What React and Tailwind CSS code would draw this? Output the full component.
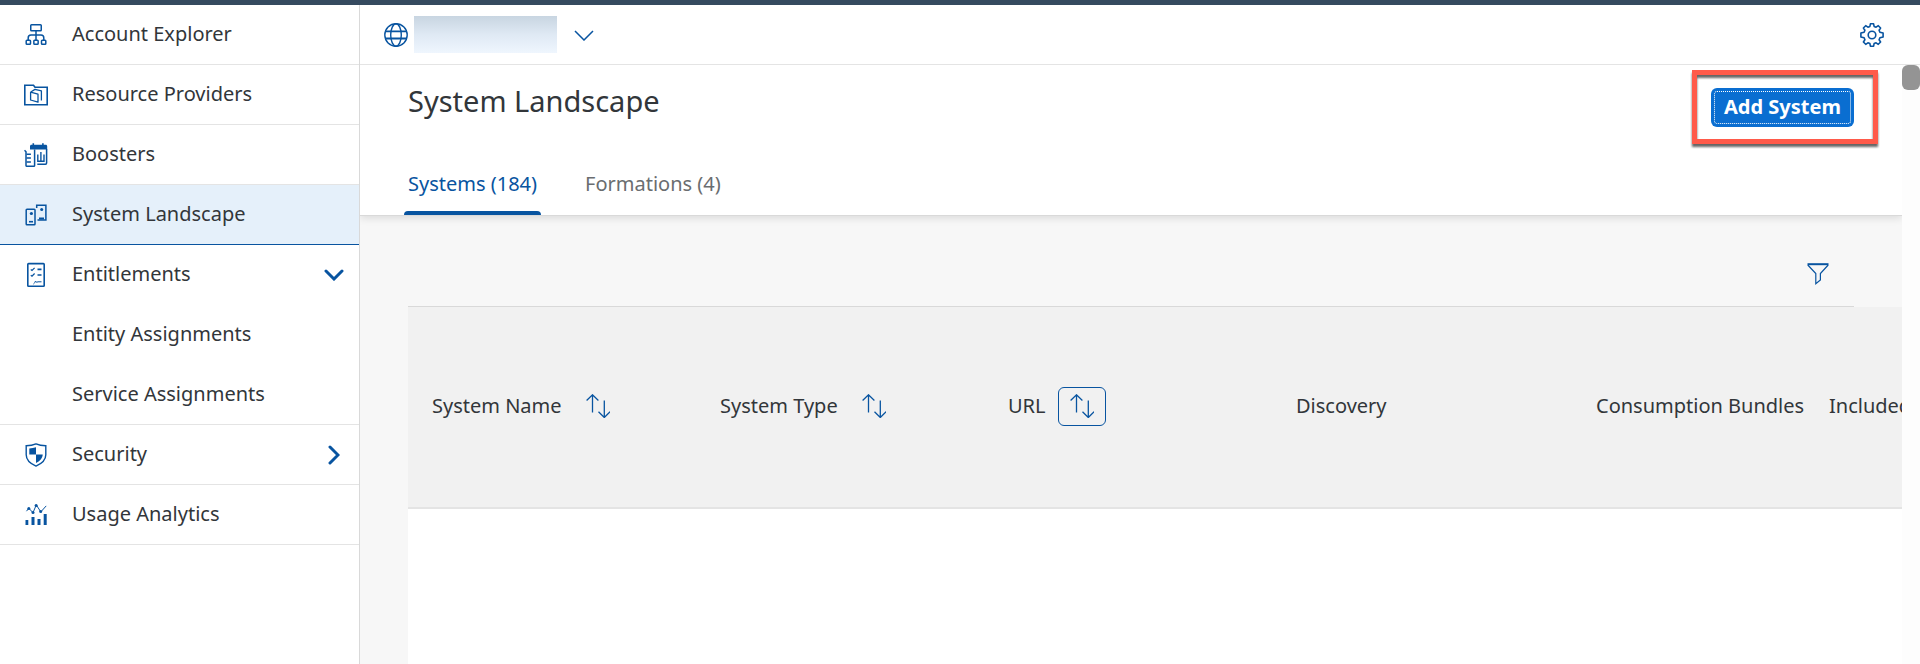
import React from "react";

function Icon({ children, className = "size-6" }) {
  return (
    <svg
      viewBox="0 0 24 24"
      className={`${className} shrink-0`}
      fill="none"
      stroke="currentColor"
      strokeWidth="1.5"
      aria-hidden="true"
    >
      {children}
    </svg>
  );
}

const OrgIcon = () => (
  <Icon>
    <rect x="6.75" y="1.75" width="10.5" height="6" rx="0.8" />
    <path d="M12 8v9M4.2 17v-2c0-1.8 1-3 2.8-3h10c1.8 0 2.8 1.200 2.800 3v2" />
    <rect x="2.200" y="17.250" width="4.300" height="4" rx="0.800" />
    <rect x="9.850" y="17.250" width="4.300" height="4" rx="0.800" />
    <rect x="17.500" y="17.250" width="4.300" height="4" rx="0.800" />
  </Icon>
);

const FolderIcon = () => (
  <Icon>
    <path d="M.8 21.700V2.300h8.700l1.500 2h12.200v17.400z" strokeWidth="1.600" />
    <path d="M6.600 9.200l7.400 2v8l-7.400-2.200zM6.800 9l4.200-2.600 6.400 1.400v9.700" strokeWidth="1.300" strokeLinejoin="round" />
  </Icon>
);

const BoostersIcon = () => (
  <Icon>
    <path d="M6 6.500V3.200c0-.9.600-1.500 1.500-1.500h1V.3h1.600v1.400h8V.3h1.600v1.400h2c.9 0 1.500.6 1.500 1.500v3.300z" fill="currentColor" stroke="none" />
    <path d="M22.600 6v14c0 .8-.4 1.200-1.200 1.200H13.300" strokeWidth="1.500" />
    <path d="M.5 7.300l1.500 1.500v13.600c0 .6.300.9.900.9h6.800c.6 0 .9-.3.900-.9V6.500" strokeWidth="1.500" />
    <path d="M2.500 11.300h4.400M2.500 15.100h4.400M2.500 18.900h4.400" />
    <path d="M13.800 11.500v6.800h6.200v-6.800M16.900 9v9" strokeWidth="1.400" />
  </Icon>
);

const LandscapeIcon = () => (
  <Icon>
    <rect x="2.200" y="6.200" width="8.800" height="15.500" rx="0.800" />
    <path d="M5 18.700h4" strokeWidth="1.600" />
    <circle cx="7.400" cy="10.500" r="1.600" fill="currentColor" stroke="none" />
    <path d="M12.700 5V2.300h9.200v14.600h-8.400" />
    <path d="M15 14.500h5v2h-5z" fill="currentColor" stroke="none" />
    <circle cx="17.700" cy="6.400" r="1.500" fill="currentColor" stroke="none" />
  </Icon>
);

const ChecklistIcon = () => (
  <Icon className="h-[26px] w-6">
    <rect x="3.800" y="0.600" width="16.400" height="22.600" rx="0.800" strokeWidth="1.600" />
    <path d="M6.800 6.500l1.200 1 2.600-2.700M6.800 12.200l1.200 1 2.600-2.700" strokeWidth="1.200" />
    <path d="M13.500 6.300h4M13.500 12h4" strokeWidth="1.700" />
    <path d="M9.500 21c1.200-.8 1.600-2.200 2-3l1 1.300 1.500-.5h3.500" strokeWidth="1" />
  </Icon>
);

const ShieldIcon = () => (
  <Icon>
    <path d="M12 .9c3 1.400 6.500 1.900 9.800 1.900v9c0 5-4.200 8.900-9.800 11.300-5.600-2.400-9.800-6.300-9.800-11.300v-9c3.300 0 6.800-.5 9.800-1.900z" strokeWidth="1.400" />
    <path d="M12 4.300v7.200H5.300V5.400c2.400 0 4.700-.4 6.700-1.100zM12 11.500h6.700c0 3.700-3 6.600-6.700 8.500z" fill="currentColor" stroke="none" />
  </Icon>
);

const AnalyticsIcon = () => (
  <Icon>
    <path d="M2.500 8.200L4.800 5.200 9 9.700l3.300-7.800 4.500 7 5.400-6" strokeWidth="1" />
    <g fill="currentColor" stroke="none">
      <circle cx="4.800" cy="5.600" r="1.500" />
      <circle cx="9" cy="9.500" r="1.500" />
      <circle cx="12.100" cy="2.600" r="1.500" />
      <circle cx="16.700" cy="8.600" r="1.500" />
      <path d="M1.500 17h2.800v5H1.500zM7.500 14h3v8h-3zM13.500 16h3v6h-3zM19.700 11h3v11h-3z" />
    </g>
  </Icon>
);

const GlobeIcon = () => (
  <Icon>
    <circle cx="12" cy="12" r="11.200" strokeWidth="1.400" />
    <ellipse cx="12" cy="12" rx="5.300" ry="11.200" strokeWidth="1.400" />
    <path d="M1.500 8.300h21M1.500 15.500h21" strokeWidth="1.800" />
  </Icon>
);

const GearIcon = () => (
  <Icon>
    <path
      d="M9.900 3.400L10.400.8h3.200l.5 2.600 2 .8 2.200-1.500 2.300 2.300-1.500 2.200.8 2 3.200.9v3.800l-3.200.9-.8 2 1.500 2.200-2.300 2.300-2.200-1.500-2 .8-.5 2.600h-3.200l-.5-2.600-2-.8-2.200 1.500L3.400 19l1.500-2.200-.8-2-3.200-.9v-3.800l3.200-.9.800-2L3.400 5l2.300-2.300 2.200 1.500z"
      strokeWidth="1.600"
      strokeLinejoin="round"
    />
    <circle cx="12" cy="12" r="3.800" strokeWidth="1.600" />
  </Icon>
);

const FilterIcon = () => (
  <Icon>
    <path d="M1.500 2.200h21" strokeWidth="2" />
    <path d="M1.800 3l8 8.500v10.300l4.600-3.900v-6.400l7.800-8.500" strokeWidth="1.200" />
  </Icon>
);

const SortIcon = () => (
  <Icon>
    <path d="M6.500 18.500V.8M.6 6.500L6.500.8l5.900 5.700M18.300 6.500v17M12.500 17.700l5.800 5.800 5.800-5.800" strokeWidth="1.300" />
  </Icon>
);

const ChevronDown = () => (
  <svg viewBox="0 0 20 12" className="h-3 w-5" fill="none" stroke="currentColor" strokeWidth="3" strokeLinecap="round" aria-hidden="true">
    <path d="M2 2l8 8 8-8" />
  </svg>
);

const ChevronRight = () => (
  <svg viewBox="0 0 12 20" className="mr-1 h-5 w-3" fill="none" stroke="currentColor" strokeWidth="3" strokeLinecap="round" aria-hidden="true">
    <path d="M2 2l8 8-8 8" />
  </svg>
);

const navItems = [
  { label: "Account Explorer", icon: OrgIcon },
  { label: "Resource Providers", icon: FolderIcon },
  { label: "Boosters", icon: BoostersIcon },
  { label: "System Landscape", icon: LandscapeIcon, active: true },
  {
    label: "Entitlements",
    icon: ChecklistIcon,
    chevron: ChevronDown,
    children: ["Entity Assignments", "Service Assignments"],
  },
  { label: "Security", icon: ShieldIcon, chevron: ChevronRight },
  { label: "Usage Analytics", icon: AnalyticsIcon },
];

function NavItem({ item }) {
  const ItemIcon = item.icon;
  const Chevron = item.chevron;
  const rowClass = "flex h-[59px] w-full items-center gap-6 pr-[15px] pl-6 text-left";
  const content = (
    <>
      <span className="text-[#0854a0]">
        <ItemIcon />
      </span>
      <span className="flex-1 pb-0.5">{item.label}</span>
      {Chevron && (
        <span className="text-[#0854a0]">
          <Chevron />
        </span>
      )}
    </>
  );
  return (
    <li className={item.active ? "border-b border-[#0854a0] bg-[#e5f0fa]" : "border-b border-[#e4e4e4]"}>
      {Chevron ? (
        <button type="button" aria-expanded={Boolean(item.children)} className={rowClass}>
          {content}
        </button>
      ) : (
        <a href="#" aria-current={item.active ? "page" : undefined} className={rowClass}>
          {content}
        </a>
      )}
      {item.children && (
        <ul>
          {item.children.map((label) => (
            <li key={label}>
              <a href="#" className="flex h-[60px] items-center pl-[72px]">
                {label}
              </a>
            </li>
          ))}
        </ul>
      )}
    </li>
  );
}

function SortButton({ label, focused }) {
  return (
    <button
      type="button"
      aria-label={`Sort by ${label}`}
      className={
        "flex h-[39px] w-12 items-center justify-center rounded-md border text-[#0854a0] " +
        (focused ? "border-[#0854a0]" : "border-transparent")
      }
    >
      <SortIcon />
    </button>
  );
}

const columns = [
  { label: "System Name", sortable: true, className: "w-72 pl-6" },
  { label: "System Type", sortable: true, className: "w-72 pl-6" },
  { label: "URL", sortable: true, focused: true, className: "w-72 pl-6" },
  { label: "Discovery", className: "w-72 pl-6" },
  { label: "Consumption Bundles", className: "w-[245px] pl-9" },
  { label: "Included", className: "w-72 pl-6" },
];

export default function App() {
  return (
    <div className="flex min-h-screen flex-col bg-white font-['Noto_Sans',sans-serif] text-[20px] leading-7 text-[#32363a]">
      <div className="h-[5px] bg-[#354a5f]" />
      <div className="flex flex-1">
        <nav aria-label="Main" className="w-[360px] shrink-0 border-r border-[#d9d9d9]">
          <ul>
            {navItems.map((item) => (
              <NavItem key={item.label} item={item} />
            ))}
          </ul>
        </nav>

        <div className="flex min-w-0 flex-1 flex-col">
          <header className="flex h-[60px] items-center border-b border-[#e4e4e4] pr-9 pl-6 text-[#0854a0]">
            <GlobeIcon />
            <div className="ml-[6px] h-[37px] w-[143px] bg-linear-to-b from-[#c8d5e1] via-[#dfe9f4] to-[#eff6fe]" />
            <button type="button" aria-label="Select account" className="ml-4 p-px">
              <svg viewBox="0 0 20 12" className="h-3 w-5" fill="none" stroke="currentColor" strokeWidth="1.500" aria-hidden="true">
                <path d="M1 2l9 9 9-9" />
              </svg>
            </button>
            <button type="button" aria-label="Settings" className="ml-auto">
              <GearIcon />
            </button>
          </header>

          <div className="flex min-h-0 flex-1">
            <main className="flex min-w-0 flex-1 flex-col overflow-hidden bg-[#f7f7f7]">
              <div className="border-b border-[#d9d9d9] bg-white px-12 shadow-[0_2px_8px_rgba(0,0,0,0.12)]">
                <div className="flex h-[89px] items-start justify-between">
                  <h1 className="pt-4 text-[29px] leading-10">System Landscape</h1>
                  <div className="relative mt-[23px]">
                    <button
                      type="button"
                      className="flex h-[39px] w-[143px] items-center justify-center rounded-md bg-[#0a6ed1] pb-0.5 font-bold text-white outline-1 -outline-offset-4 outline-dotted outline-white"
                    >
                      Add System
                    </button>
                    <div className="pointer-events-none absolute -top-[18px] -right-6 -bottom-[17px] -left-[19px] border-[5px] border-[#ff5a4a] drop-shadow-[0_3px_1px_rgba(0,0,0,0.6)]" />
                  </div>
                </div>
                <div role="tablist" className="flex gap-10">
                  <button type="button" role="tab" aria-selected="true" className="-ml-1 flex h-[61px] flex-col justify-between px-1 text-[#0854a0]">
                    <span className="pt-4">Systems (184)</span>
                    <span className="-mx-1 h-1 self-stretch rounded-t-sm bg-[#0854a0]" />
                  </button>
                  <button type="button" role="tab" aria-selected="false" className="flex h-[61px] items-start px-1 pt-4 text-[#6a6d70]">
                    Formations (4)
                  </button>
                </div>
              </div>

              <div className="mr-12 ml-12 flex h-[91px] items-end justify-end border-b border-[#d9d9d9] pr-6 pb-5">
                <button type="button" aria-label="Filter" className="text-[#0854a0]">
                  <FilterIcon />
                </button>
              </div>

              <div className="ml-12 flex-1 overflow-hidden bg-white">
                <table className="w-[1685px] table-fixed border-collapse">
                  <thead>
                    <tr className="h-[201px] border-b-2 border-[#e4e4e4] bg-[#f1f1f1]">
                      {columns.map((col) => (
                        <th key={col.label} scope="col" className={`${col.className} pb-0.5 text-left font-normal`}>
                          <div className="flex items-center gap-3 whitespace-nowrap">
                            <span>{col.label}</span>
                            {col.sortable && <SortButton label={col.label} focused={col.focused} />}
                          </div>
                        </th>
                      ))}
                    </tr>
                  </thead>
                </table>
              </div>
            </main>
            <div className="w-[18px] shrink-0 bg-[#fdfdfd]">
              <div className="h-[25px] rounded-md bg-[#949494]" />
            </div>
          </div>
        </div>
      </div>
    </div>
  );
}
